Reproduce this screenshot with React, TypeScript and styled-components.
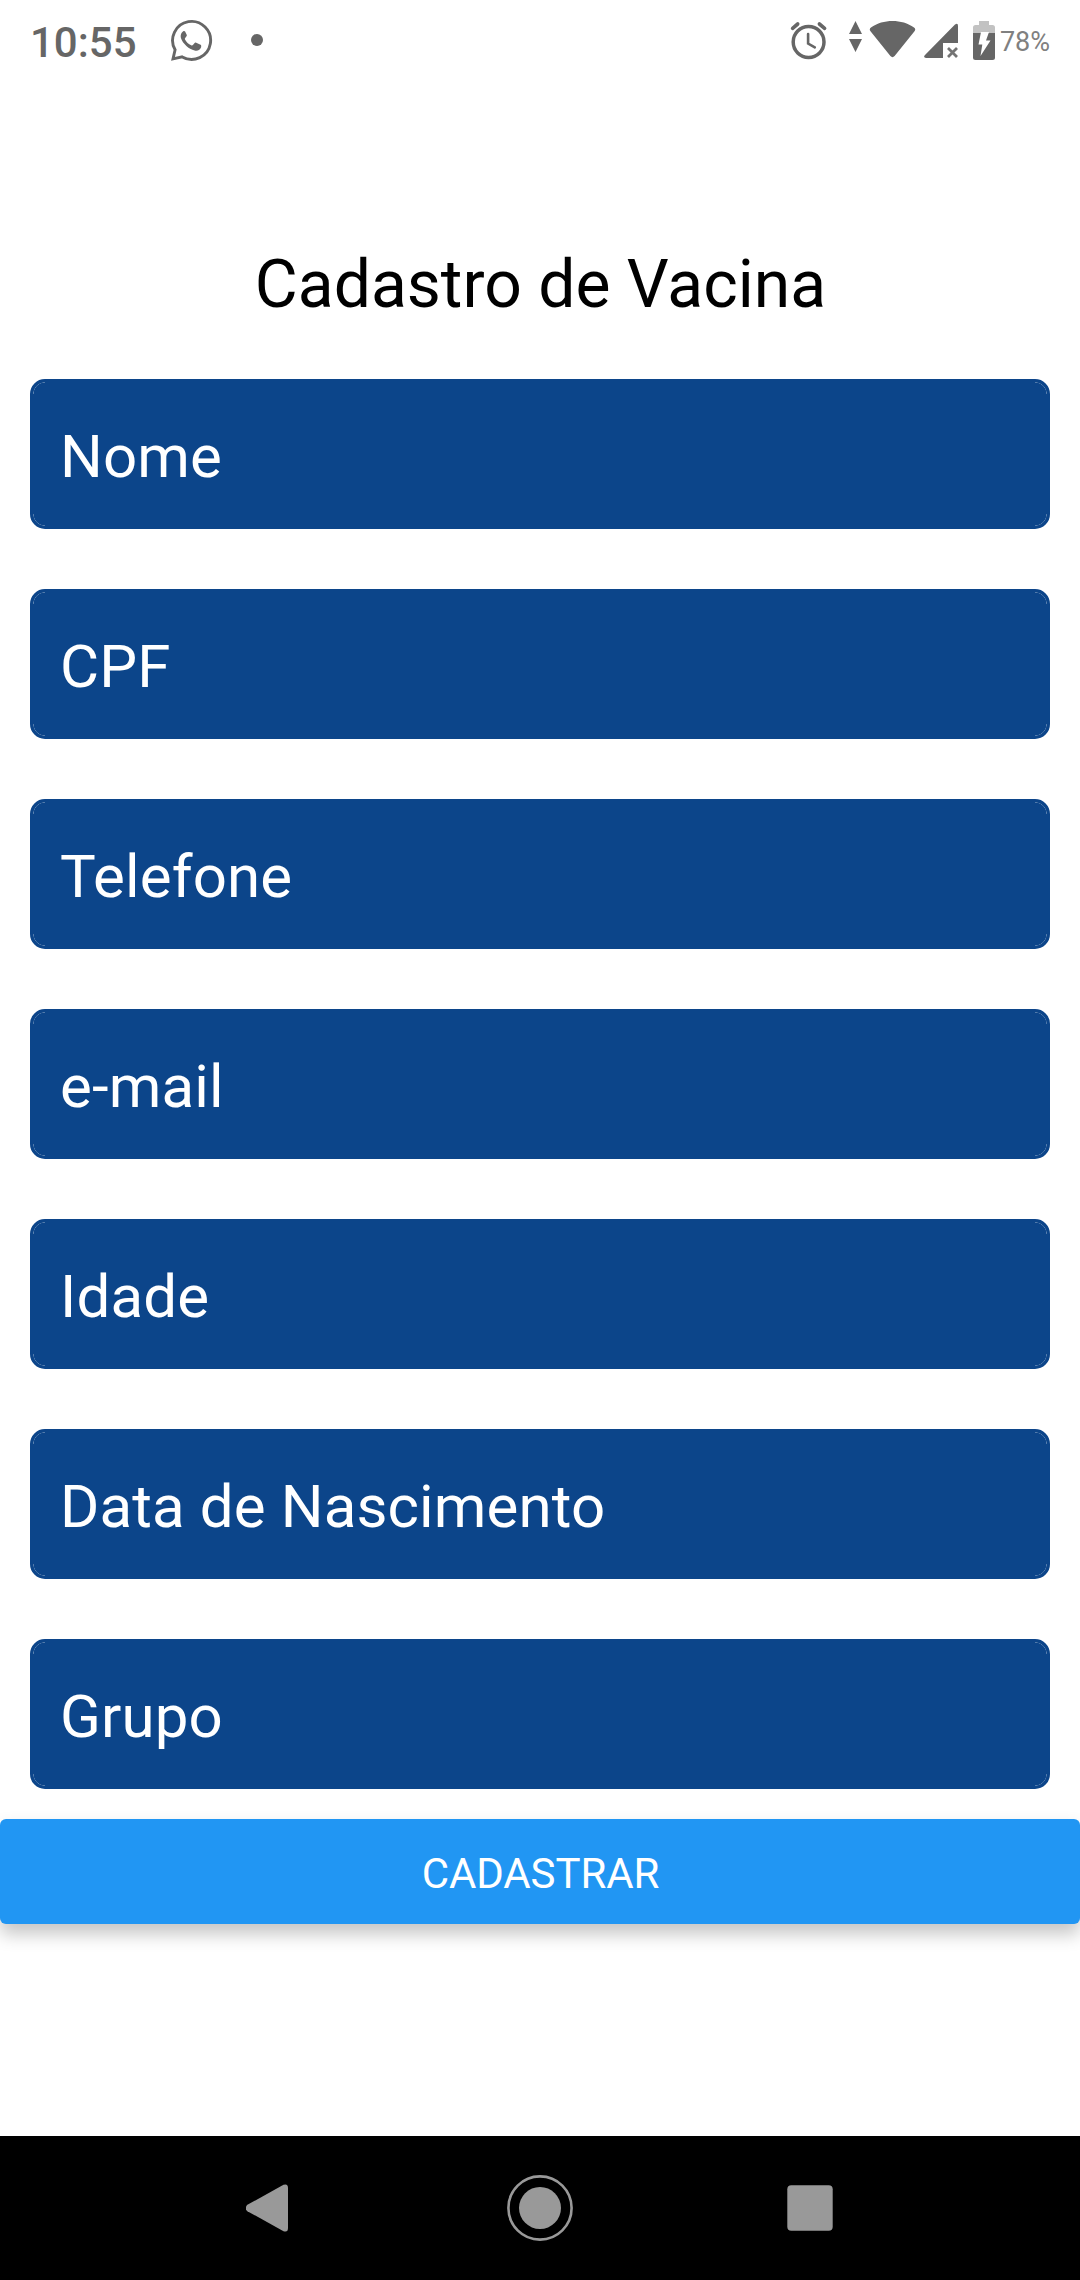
import React from 'react';
import styled, { createGlobalStyle } from 'styled-components';

const GlobalStyle = createGlobalStyle`
  * { box-sizing: border-box; }
  body { margin: 0; background: #fff; }
`;

const Screen = styled.div`
  display: flex;
  flex-direction: column;
  width: 1080px;
  height: 2280px;
  overflow: hidden;
  background: #fff;
  font-family: Roboto, sans-serif;
`;

const StatusBar = styled.header`
  display: flex;
  align-items: flex-start;
  justify-content: space-between;
  height: 72px;
  padding: 0 30px;
  color: #666;
`;

const StatusGroup = styled.div`
  display: flex;
  height: 84px;
`;

const Clock = styled.span`
  width: 140px;
  padding-top: 18px;
  font-size: 42px;
  font-weight: 500;
  line-height: 50px;
`;

const BatteryLevel = styled.span`
  padding-top: 26px;
  font-size: 27px;
  line-height: 33px;
  color: #808080;
`;

const Glyph = styled.svg`
  display: block;
  flex: none;
`;

const Form = styled.main`
  display: flex;
  flex: 1;
  flex-direction: column;
  padding-top: 174px;
`;

const Title = styled.h1`
  margin: 0 0 55px;
  padding-left: 1px;
  font-size: 66px;
  font-weight: 400;
  line-height: 78px;
  text-align: center;
  color: #000;
`;

const Fields = styled.div`
  display: flex;
  flex-direction: column;
  gap: 60px;
  padding: 0 30px;
`;

const arc = (x: string, y: string) =>
  `radial-gradient(circle at ${x} ${y}, transparent 11px, rgba(255,255,255,.35) 11.6px, transparent 12.2px)`;

const Field = styled.input`
  width: 100%;
  height: 150px;
  padding: 4px 27px 0;
  border: 3px solid #0c458a;
  border-radius: 15px;
  outline: none;
  background:
    ${arc('12px', '12px')} left top / 12px 12px no-repeat,
    ${arc('0', '12px')} right top / 12px 12px no-repeat,
    ${arc('12px', '0')} left bottom / 12px 12px no-repeat,
    ${arc('0', '0')} right bottom / 12px 12px no-repeat,
    #0c458a;
  font-family: Roboto, sans-serif;
  font-size: 60px;
  letter-spacing: 0.13px;
  color: #fff;
  &::placeholder { color: #fff; opacity: 1; }
`;

const Submit = styled.button`
  width: 100%;
  height: 105px;
  margin-top: 30px;
  padding: 3px 0 0 1px;
  border: 0;
  border-radius: 6px;
  background: #2196f3;
  box-shadow: 0 10px 18px rgba(0, 0, 0, 0.23);
  font-family: Roboto, sans-serif;
  font-size: 42px;
  letter-spacing: -0.1px;
  color: #fff;
`;

const NavBar = styled.nav`
  display: flex;
  align-items: center;
  justify-content: center;
  gap: 198px;
  height: 144px;
  background: #000;
`;

const fields = ['Nome', 'CPF', 'Telefone', 'e-mail', 'Idade', 'Data de Nascimento', 'Grupo'];

const NotificationIcons = () => (
  <Glyph width="100" height="84" viewBox="170 0 100 84">
    <path
      d="M175.1 49.8A19 19 0 1 1 182.2 56.9L173 58.9Z"
      fill="none" stroke="#666" strokeWidth="2.9" strokeLinejoin="miter"
    />
    <path
      d="M183.2 31.2C181.2 32.6 180.2 35 180.9 38C182.6 43.5 189 49.5 195.5 50.8C198 51.2 200.6 49.2 201.1 47.2C201.4 45.8 201.1 45.1 200.6 44.8L196.2 42.7C195.4 42.4 194.9 42.7 194.4 43.3L192.9 45.1C192.4 45.6 191.8 45.6 191.2 45.3C188.5 44 186.3 41.9 185 39.4C184.7 38.8 184.8 38.4 185.2 37.9L186.5 36.3C186.9 35.8 187 35.3 186.7 34.7L185.1 31.6C184.7 30.8 184.1 30.7 183.2 31.2Z"
      fill="#666"
    />
    <circle cx="257" cy="40" r="6" fill="#666" />
  </Glyph>
);

const SystemIcons = () => (
  <Glyph width="215" height="84" viewBox="785 0 215 84">
    <g fill="none" stroke="#666" strokeLinecap="round">
      <circle cx="808.6" cy="42" r="15.4" strokeWidth="3.5" />
      <path d="M792.6 28.3L797.7 24M824.6 28.3L819.4 24" strokeWidth="3.6" />
      <path d="M808.1 34V43.5L814.8 47.4" strokeWidth="2.6" />
    </g>
    <g fill="#666">
      <path d="M855.5 21L862 34H849ZM849 39H862L855.5 52Z" />
      <path d="M870.5 31.3Q868.8 29.2 871 27.5C883 18.9 902 18.9 914 27.5Q916.2 29.2 914.5 31.3L894.6 56Q892.5 58.3 890.4 56Z" />
      <path d="M925 55L955 24.6Q958 22.5 958 26V43H943V58H926Q922.8 57.3 925 55Z" />
      <path d="M973 33H995V57.5Q995 60 992.5 60H975.5Q973 60 973 57.5Z" />
    </g>
    <path d="M948 48L957 57M957 48L948 57" stroke="#747474" strokeWidth="2.8" />
    <path d="M973 33V27.5Q973 25 975.5 25H979V21H989V25H992.5Q995 25 995 27.5V33Z" fill="#c2c2c2" />
    <path d="M981 32H989L986 40.5H990.5L980.5 56L982.3 44.5H978.5Z" fill="#fff" />
  </Glyph>
);

const BackIcon = () => (
  <Glyph width="42" height="48" viewBox="0 0 42 48">
    <path d="M1.4 20.8L37.5 .8Q42 -.8 42 4V44Q42 48.8 37.5 47.2L1.4 27.2Q-1.8 24 1.4 20.8Z" fill="#999" />
  </Glyph>
);

const HomeIcon = () => (
  <Glyph width="66" height="66" viewBox="0 0 66 66">
    <circle cx="33" cy="33" r="31.6" fill="none" stroke="#999" strokeWidth="2.6" />
    <circle cx="33" cy="33" r="21" fill="#999" />
  </Glyph>
);

const RecentsIcon = () => (
  <Glyph width="46" height="46" viewBox="0 0 46 46">
    <rect x=".3" y=".3" width="45.4" height="45.4" rx="4" fill="#999" />
  </Glyph>
);

// Evens out the icon widths so the home button stays centred.
const NavSlot = styled.div<{ $w: number; $shift?: number }>`
  display: flex;
  width: ${(p) => p.$w}px;
  padding-left: ${(p) => p.$shift ?? 0}px;
`;

export default function App() {
  return (
    <>
      <GlobalStyle />
      <Screen>
        <StatusBar>
          <StatusGroup>
            <Clock>10:55</Clock>
            <NotificationIcons />
          </StatusGroup>
          <StatusGroup>
            <SystemIcons />
            <BatteryLevel>78%</BatteryLevel>
          </StatusGroup>
        </StatusBar>
        <Form>
          <Title>Cadastro de Vacina</Title>
          <Fields>
            {fields.map((name) => (
              <Field key={name} placeholder={name} aria-label={name} />
            ))}
          </Fields>
          <Submit>CADASTRAR</Submit>
        </Form>
        <NavBar>
          <NavSlot $w={63}><BackIcon /></NavSlot>
          <NavSlot $w={66}><HomeIcon /></NavSlot>
          <NavSlot $w={63} $shift={16}><RecentsIcon /></NavSlot>
        </NavBar>
      </Screen>
    </>
  );
}
